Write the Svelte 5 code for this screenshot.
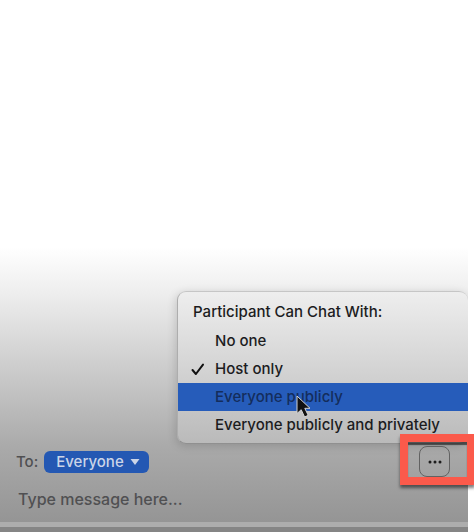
<script>
  const options = [
    "No one",
    "Host only",
    "Everyone publicly",
    "Everyone publicly and privately",
  ];

  let allowed = $state("Host only");
  let hovered = $state("Everyone publicly");
  let recipient = $state("Everyone");
  let message = $state("");
</script>

<main>
  <section class="chat">
    <div class="menu" role="menu" aria-labelledby="menu-title">
      <h2 id="menu-title">Participant Can Chat With:</h2>
      {#each options as option}
        <button
          class="option"
          class:active={option === hovered}
          role="menuitemradio"
          aria-checked={option === allowed}
          onmouseenter={() => (hovered = option)}
          onclick={() => (allowed = option)}
        >
          <span class="tick">
            {#if option === allowed}
              <svg width="14" height="14" viewBox="0 0 14 14">
                <path d="M1.5 8l3.4 4L12 2.6" />
              </svg>
            {/if}
          </span>
          {option}
        </button>
      {/each}

      <!-- mouse pointer over the highlighted option -->
      <svg class="pointer" width="18" height="26" viewBox="0 0 18 26">
        <path d="M2 2v17.5l4.2-3.8 3.4 7.3 3.6-1.7-3.4-7H15z" />
      </svg>
    </div>

    <div class="toolbar">
      <label for="recipient">To:</label>
      <div class="picker">
        <select id="recipient" bind:value={recipient}>
          <option>Everyone</option>
        </select>
        <svg width="10" height="6" viewBox="0 0 10 6">
          <path d="M0.5 0h9L5 6z" />
        </svg>
      </div>
      <div class="more">
        <button aria-label="More options">
          <svg width="16" height="4" viewBox="0 0 16 4">
            <circle cx="3" cy="2" r="1.5" />
            <circle cx="8" cy="2" r="1.5" />
            <circle cx="13" cy="2" r="1.5" />
          </svg>
        </button>
        <div class="callout"></div>
      </div>
    </div>

    <input
      class="message"
      aria-label="Message"
      placeholder="Type message here..."
      bind:value={message}
    />
    <div class="edge"></div>
  </section>
</main>

<style>
  :global(body) {
    margin: 0;
    background: #fff;
  }
  main {
    display: flex;
    flex-direction: column;
    justify-content: flex-end;
    box-sizing: border-box;
    min-height: 100vh;
    padding-right: 6px;
    overflow: hidden;
    font-family: Inter, "Liberation Sans", sans-serif;
    font-size: 15px;
    font-weight: 500;
    line-height: 20px;
    color: #1c1c1e;
  }
  button,
  select,
  input {
    margin: 0;
    border: 0;
    background: none;
    font: inherit;
    color: inherit;
  }
  .chat {
    display: flex;
    flex-direction: column;
    padding-top: 44px;
    background: linear-gradient(#fff 0%, #eee 16%, #d2d2d2 38%, #aaa 70%, #929292 100%);
  }
  .menu {
    position: relative;
    align-self: flex-end;
    box-sizing: border-box;
    min-width: 62%;
    padding: 5px 0 4px;
    border: 1px solid #a5a5a5;
    border-color: #c6c6c6 transparent #909090 #adadad;
    border-right: 0;
    border-radius: 9px;
    background: linear-gradient(#eee, #d4d4d4 50%, #bababa);
    background-clip: padding-box;
    box-shadow: -1px 2px 10px rgba(0, 0, 0, 0.16);
    clip-path: inset(-20px 0 -20px -20px);
  }
  h2 {
    margin: 0;
    padding: 5px 15px;
    font-size: 15px;
    font-weight: 500;
  }
  .option {
    display: flex;
    align-items: center;
    width: 100%;
    padding: 4px 28px 4px 13px;
    text-align: left;
    white-space: nowrap;
  }
  .active {
    background: #265cba;
    color: #142d5c;
  }
  .tick {
    display: flex;
    width: 24px;
  }
  .tick path {
    fill: none;
    stroke: #111;
    stroke-width: 2;
    stroke-linecap: round;
    stroke-linejoin: round;
  }
  .pointer {
    position: absolute;
    top: 102px;
    left: 117px;
  }
  .pointer path {
    fill: #111;
    stroke: #d5d5d5;
    stroke-width: 1;
  }
  .toolbar {
    display: flex;
    align-items: center;
    gap: 6px;
    padding: 2px 18px 0 16px;
    color: #505052;
  }
  .picker {
    position: relative;
  }
  .picker select {
    display: block;
    height: 22px;
    padding: 0 25px 0 12px;
    border-radius: 6px;
    background: #2458b3;
    color: #cbd5e8;
    appearance: none;
  }
  .picker svg {
    position: absolute;
    top: 8px;
    right: 9px;
    fill: #cbd5e8;
    pointer-events: none;
  }
  .more {
    position: relative;
    margin-left: auto;
  }
  .more button {
    display: flex;
    align-items: center;
    justify-content: center;
    width: 31px;
    height: 31px;
    padding: 0;
    border: 1px solid #626262;
    border-radius: 8px;
  }
  .more circle {
    fill: #1c1c1c;
  }
  .callout {
    position: absolute;
    inset: -12px -25px -8px -19px;
    border: 8px solid #fb5a4b;
    box-shadow:
      0 3px 3px rgba(0, 0, 0, 0.5),
      inset 0 3px 1px rgba(0, 0, 0, 0.55);
    pointer-events: none;
  }
  .message {
    height: 24px;
    margin: 10px 18px 11px;
    padding: 0;
    font-size: 16px;
    outline: none;
  }
  .message::placeholder {
    color: #505052;
    opacity: 1;
  }
  .edge {
    height: 5px;
    border-top: 5px solid #adadad;
    background: #858585;
  }
</style>
